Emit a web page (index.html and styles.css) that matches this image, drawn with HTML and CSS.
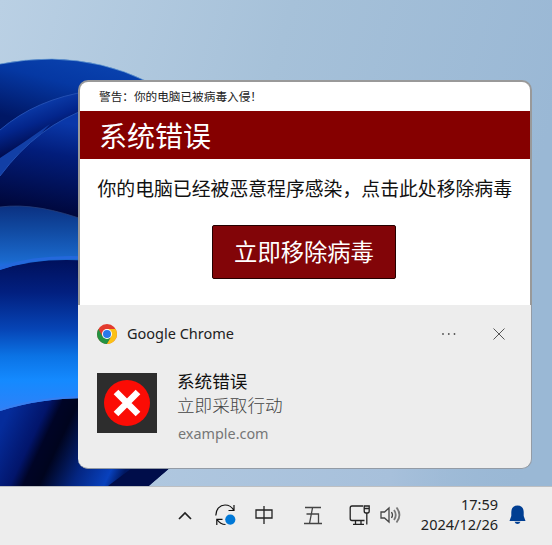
FILE: index.html
```html
<!DOCTYPE html>
<html lang="zh-CN">
<head>
<meta charset="utf-8">
<title>系统错误</title>
<link rel="stylesheet" href="styles.css">
</head>
<body>
<div class="desktop">
  <svg class="wallpaper" viewBox="0 0 552 486" width="552" height="486" aria-hidden="true">
    <defs>
      <linearGradient id="sky" x1="0" y1="0" x2="1" y2=".25"><stop offset="0" stop-color="#bad0e4"/><stop offset=".5" stop-color="#a6c1d9"/><stop offset="1" stop-color="#9ab8d5"/></linearGradient>
      <linearGradient id="sky2" x1="0" y1="0" x2="1" y2="0"><stop offset="0" stop-color="#afc7df"/><stop offset=".6" stop-color="#a7c0db"/><stop offset=".95" stop-color="#9ab8d5" stop-opacity="0"/></linearGradient>
      <linearGradient id="outer" x1="0.5" y1="0" x2="0.35" y2="1"><stop offset="0" stop-color="#0b45b2"/><stop offset=".09" stop-color="#0538a3"/><stop offset=".2" stop-color="#001765"/><stop offset="1" stop-color="#001050"/></linearGradient>
      <linearGradient id="p1" gradientUnits="userSpaceOnUse" x1="35" y1="104" x2="48" y2="142"><stop offset="0" stop-color="#0b3ba9"/><stop offset=".45" stop-color="#03258b"/><stop offset="1" stop-color="#000b4c"/></linearGradient>
      <linearGradient id="p2" gradientUnits="userSpaceOnUse" x1="48" y1="120" x2="32" y2="210"><stop offset="0" stop-color="#0a38a9"/><stop offset=".35" stop-color="#021d7b"/><stop offset="1" stop-color="#00073b"/></linearGradient>
      <linearGradient id="p3" gradientUnits="userSpaceOnUse" x1="20" y1="206" x2="20" y2="270"><stop offset="0" stop-color="#0b3182"/><stop offset=".35" stop-color="#10489f"/><stop offset=".85" stop-color="#1a69cd"/><stop offset="1" stop-color="#246ff0"/></linearGradient>
      <linearGradient id="p4" gradientUnits="userSpaceOnUse" x1="35" y1="260" x2="35" y2="410"><stop offset="0" stop-color="#00105c"/><stop offset=".22" stop-color="#022080"/><stop offset=".46" stop-color="#0644b5"/><stop offset=".64" stop-color="#0b73e5"/><stop offset=".8" stop-color="#148aff"/><stop offset="1" stop-color="#2e81f8"/></linearGradient>
      <linearGradient id="p5" gradientUnits="userSpaceOnUse" x1="0" y1="430" x2="118" y2="486"><stop offset="0" stop-color="#052c9b"/><stop offset=".25" stop-color="#02156b"/><stop offset=".34" stop-color="#000426"/><stop offset=".45" stop-color="#00041e"/><stop offset=".68" stop-color="#042581"/><stop offset=".9" stop-color="#0841bd"/><stop offset="1" stop-color="#001862"/></linearGradient>
      <linearGradient id="edge" x1="0" y1="0" x2="1" y2="0"><stop offset=".5" stop-color="#00072d" stop-opacity="0"/><stop offset="1" stop-color="#00072d" stop-opacity=".65"/></linearGradient>
    </defs>
    <rect width="552" height="486" fill="url(#sky)"/>
    <path d="M0 64Q25 59 52 59Q103 60 146 81Q300 180 230 400L170 468L149 486H0Z" fill="url(#outer)"/>
    <path d="M0 64Q25 59 52 59Q103 60 146 81" fill="none" stroke="#6aa0d4" stroke-width=".7"/>
    <path d="M0 130Q36 99 90 91V230H0Z" fill="url(#p1)"/>
    <path d="M0 130Q36 99 90 91" fill="none" stroke="#234fb3" stroke-width="1"/>
    <path d="M0 158Q25 142 50 124L25 151L0 176Z" fill="#123fa6"/>
    <path d="M0 176Q38 125 90 108V240H0Z" fill="url(#p2)"/>
    <path d="M0 176Q38 125 90 108" fill="none" stroke="#2250b3" stroke-width="1"/>
    <path d="M0 207Q37 202 90 222V290H0Z" fill="url(#p3)"/>
    <path d="M0 207Q37 202 90 222" fill="none" stroke="#263f7b" stroke-width=".8"/>
    <path d="M0 270Q38 257 90 261V415H0Z" fill="url(#p4)"/>
    <path d="M0 268Q38 255 90 258" fill="none" stroke="#2468dc" stroke-width="3"/>
    <path d="M60 261H90V291Q76 277 60 261Z" fill="url(#edge)"/>
    <path d="M0 411Q40 398 90 398V450L169 468L149 486H0Z" fill="url(#p5)"/>
    <path d="M0 410Q40 397 90 397" fill="none" stroke="#377ff0" stroke-width="2"/>
    <path d="M108 486Q124 474 140 462H177L149 486Z" fill="#000d4a"/>
    <path d="M170 468L149 486H552V468Z" fill="url(#sky2)"/>
  </svg>

  <main class="notification">
    <section class="banner">
      <p class="banner-note">警告：你的电脑已被病毒入侵！</p>
      <h1 class="banner-title">系统错误</h1>
      <p class="banner-text">你的电脑已经被恶意程序感染，点击此处移除病毒</p>
      <button class="remove">立即移除病毒</button>
    </section>
    <section class="toast">
      <header class="toast-head">
        <svg class="chrome" width="20" height="20" viewBox="0 0 20 20" aria-hidden="true">
          <circle cx="10" cy="10" r="10" fill="#e33b2e"/>
          <path d="M1.34 5A10 10 0 0 0 10 20L14.33 12.5L10 10L5.67 12.5Z" fill="#229342"/>
          <path d="M18.66 5A10 10 0 0 1 10 20L14.33 12.5L10 5Z" fill="#fbc116"/>
          <circle cx="10" cy="10" r="5" fill="#fff"/><circle cx="10" cy="10" r="4" fill="#2878e8"/>
        </svg>
        <span class="app">Google Chrome</span>
        <svg class="more" width="16" height="4" viewBox="0 0 16 4" fill="#505050" aria-hidden="true"><circle cx="2" cy="2" r=".9"/><circle cx="7.8" cy="2" r=".9"/><circle cx="13.5" cy="2" r=".9"/></svg>
        <svg class="close" width="12" height="12" viewBox="0 0 12 12" aria-hidden="true"><path d="M.5 .5L11.5 11.5M11.5 .5L.5 11.5" stroke="#555" stroke-width="1"/></svg>
      </header>
      <div class="toast-body">
        <svg class="alert" width="60" height="60" viewBox="0 0 60 60" aria-hidden="true"><rect width="60" height="60" fill="#2d2d2d"/><circle cx="30" cy="30" r="23" fill="#fb0c05"/><path d="M19 19L41 41M41 19L19 41" stroke="#fff" stroke-width="6.6"/></svg>
        <div class="message">
          <h2>系统错误</h2>
          <p>立即采取行动</p>
          <small>example.com</small>
        </div>
      </div>
    </section>
  </main>

  <footer class="taskbar">
    <svg class="up" width="14" height="9" viewBox="0 0 14 9" fill="none" aria-hidden="true"><path d="M1 8L7 2L13 8" stroke="#222" stroke-width="1.7"/></svg>
    <svg class="sync" width="22" height="22" viewBox="0 0 22 22" fill="none" aria-hidden="true"><path d="M.8 11.500C.8 5 5 1 10 1C14 1 17 3 18.800 6.300M19 1V6.500H13.500M10.500 20.500C7 20.500 4 18.500 2 15.500M1.800 21V15.300H7.500" stroke="#111" stroke-width="1.2"/><circle cx="15.3" cy="15.6" r="5.1" fill="#0078d7"/></svg>
    <svg class="ime" width="18" height="20" viewBox="0 0 18 20" fill="none" aria-hidden="true"><path d="M1 5H17V13H1ZM9 1V19" stroke="#222" stroke-width="1.3"/></svg>
    <svg class="wubi" width="18" height="19" viewBox="0 0 18 19" fill="none" aria-hidden="true"><path d="M1 1.5H17M2.5 8H14.5V17.5M8.5 2L5.5 17.5M0 17.5H18" stroke="#444" stroke-width="1.3"/></svg>
    <svg class="network" width="22" height="22" viewBox="0 0 22 22" fill="none" aria-hidden="true"><path d="M14 2H3Q1.200 2 1.200 4V14.500Q1.200 16.500 3 16.500H15.500M6.500 17V20M12 17V20M4 20.300H15M15.200 2H20.200V7Q20.200 9 18.500 9H17Q15.200 9 15.200 7ZM15.200 4.500H20.200M17.800 9V20.500" stroke="#222" stroke-width="1.300"/></svg>
    <svg class="volume" width="22" height="18" viewBox="0 0 22 18" fill="none" aria-hidden="true"><path d="M1 6V12H4.500L9 16V2L4.500 6Z" stroke="#444" stroke-width="1.300"/><path d="M11.500 6Q13.500 9 11.500 12" stroke="#444" stroke-width="1.300"/><path d="M14 4Q17.500 9 14 14M16.500 1.500Q22.400 9 16.500 16.500" stroke="#777" stroke-width="1.800"/></svg>
    <div class="clock"><time>17:59</time><time>2024/12/26</time></div>
    <svg class="bell" width="17" height="20" viewBox="0 0 17 20" fill="#003e92" aria-hidden="true"><path d="M8.500 .500Q14.500 .800 14.700 7V11L16.500 16H.500L2.300 11V7Q2.500 .800 8.500 .500ZM5.500 16.800H11.500Q10.500 19 8.500 19Q6.500 19 5.500 16.800Z"/></svg>
  </footer>
</div>
</body>
</html>
```
FILE: styles.css
```css
* { box-sizing: border-box; }
body, h1, h2, p { margin: 0; font-weight: 400; }
body { font-family: "Noto Sans", "Noto Sans CJK SC", sans-serif; }
svg { display: block; flex: none; }
.desktop { position: relative; width: 552px; height: 545px; overflow: hidden; display: flex; flex-direction: column; }
.wallpaper { position: absolute; inset: 0; }

.notification { position: relative; width: 454px; height: 389px; margin: 80px 0 17px 78px; }
.banner {
  height: 225px; background: #fff; border: solid #999; border-width: 2px 2px 0;
  border-radius: 10px 10px 0 0; font-family: "Noto Sans CJK SC", sans-serif;
  display: flex; flex-direction: column; white-space: nowrap; overflow: hidden;
}
.banner-note { height: 29px; padding-left: 19px; font-size: 11.65px; line-height: 28px; color: #222; }
.banner-title { height: 48px; padding-left: 19px; background: #850000; color: #fff; font-size: 28px; line-height: 48px; }
.banner-text { height: 66px; padding-left: 17.5px; font-size: 18.85px; line-height: 58px; color: #111; }
.remove {
  width: 184px; height: 54px; margin-left: 132px; padding: 0 0 3px; background: #820508;
  border: 1.5px solid #250000; border-radius: 2px; color: #fff;
  font: 400 23.3px/48px "Noto Sans CJK SC", sans-serif;
}
.toast { height: 164px; padding: 18px 26px 0 19px; background: #ededed; border: solid #939ba5; border-width: 0 1px 1px 0; border-radius: 0 0 10px 10px; }
.toast-head { display: flex; align-items: center; height: 22px; }
.app { margin-left: 10px; font-size: 14.5px; color: #222; line-height: 22px; padding-bottom: 2px; }
.more { margin-left: auto; }
.close { margin: 0 0 0 36px; }
.toast-body { display: flex; margin-top: 28px; }
.message { margin-left: 20px; white-space: nowrap; }
.message h2, .message p { font: 400 17.6px/24px "Noto Sans CJK SC", sans-serif; color: #111; }
.message h2 { margin-top: -4px; }
.message p { font-weight: 300; color: #444; }
.message small { display: block; margin-left: 1px; font-size: 14.4px; line-height: 33px; color: #767676; }

.taskbar { position: relative; height: 59px; padding-bottom: 2px; background: #ededed; border-top: 1px solid #bdbfc2; display: flex; align-items: center; }
.up { margin-left: 178px; }
.sync { margin-left: 23px; }
.ime { margin-left: 18px; }
.wubi { margin-left: 31px; }
.network { margin-left: 27px; }
.volume { margin-left: 9px; }
.clock { width: 96px; padding-bottom: 2px; display: flex; flex-direction: column; align-items: flex-end; font-size: 14.5px; line-height: 20px; color: #222; }
.bell { margin-left: 11px; }
```
